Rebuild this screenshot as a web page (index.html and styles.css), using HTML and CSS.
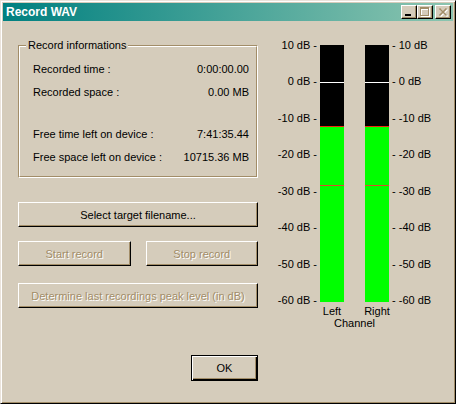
FILE: index.html
```html
<!DOCTYPE html>
<html>
<head>
<meta charset="utf-8">
<title>Record WAV</title>
<link rel="stylesheet" href="styles.css">
</head>
<body>
<div class="window">
  <div class="titlebar">
    <span class="title">Record WAV</span>
    <div class="caption-buttons">
      <span class="cbtn">
        <svg width="14" height="12" viewBox="0 0 14 12" shape-rendering="crispEdges"><rect x="3" y="8" width="6" height="2" fill="#000"/></svg>
      </span>
      <span class="cbtn">
        <svg width="14" height="12" viewBox="0 0 14 12" shape-rendering="crispEdges">
          <g fill="#fff" transform="translate(1,1)"><rect x="2" y="1" width="9" height="2"/><rect x="2" y="1" width="1" height="9"/><rect x="10" y="1" width="1" height="9"/><rect x="2" y="9" width="9" height="1"/></g>
          <g fill="#a28d68"><rect x="2" y="1" width="9" height="2"/><rect x="2" y="1" width="1" height="9"/><rect x="10" y="1" width="1" height="9"/><rect x="2" y="9" width="9" height="1"/></g>
        </svg>
      </span>
      <span class="cbtn close">
        <svg width="14" height="12" viewBox="0 0 14 12">
          <g stroke="#fff" stroke-width="1.6" transform="translate(1,1)"><path d="M3.5 2.5 L10.5 9.5 M10.5 2.5 L3.5 9.5"/></g>
          <g stroke="#a28d68" stroke-width="1.6"><path d="M3.5 2.5 L10.5 9.5 M10.5 2.5 L3.5 9.5"/></g>
        </svg>
      </span>
    </div>
  </div>
  <div class="content">
    <div class="main">
      <div class="left">
        <div class="group">
          <span class="group-label">Record informations</span>
          <div class="group-inner">
            <div class="row"><span>Recorded time :</span><span>0:00:00.00</span></div>
            <div class="row"><span>Recorded space :</span><span>0.00 MB</span></div>
            <div class="row spaced"><span>Free time left on device :</span><span>7:41:35.44</span></div>
            <div class="row"><span>Free space left on device :</span><span>10715.36 MB</span></div>
          </div>
        </div>
        <button class="btn select">Select target filename...</button>
        <div class="btn-row">
          <button class="btn" disabled>Start record</button>
          <button class="btn" disabled>Stop record</button>
        </div>
        <button class="btn determine" disabled>Determine last recordings peak level (in dB)</button>
      </div>
      <div class="meter">
        <div class="scale scale-l">
          <span>10 dB -</span><span>0 dB -</span><span>-10 dB -</span><span>-20 dB -</span>
          <span>-30 dB -</span><span>-40 dB -</span><span>-50 dB -</span><span>-60 dB -</span>
        </div>
        <div class="bars">
          <div class="bar-row">
            <div class="bar">
              <div class="seg-top"></div><div class="zero"></div><div class="seg-mid"></div><div class="peak"></div><div class="lvl-a"></div><div class="hold"></div><div class="lvl-b"></div>
            </div>
            <div class="bar">
              <div class="seg-top"></div><div class="zero"></div><div class="seg-mid"></div><div class="peak"></div><div class="lvl-a"></div><div class="hold"></div><div class="lvl-b"></div>
            </div>
          </div>
          <div class="chan-row"><span>Left</span><span>Right</span></div>
          <div class="chan">Channel</div>
        </div>
        <div class="scale scale-r">
          <span>- 10 dB</span><span>- 0 dB</span><span>- -10 dB</span><span>- -20 dB</span>
          <span>- -30 dB</span><span>- -40 dB</span><span>- -50 dB</span><span>- -60 dB</span>
        </div>
      </div>
    </div>
    <div class="footer">
      <button class="btn ok">OK</button>
    </div>
  </div>
</div>
</body>
</html>
```

FILE: styles.css
```css
* { box-sizing: border-box; }

html, body {
  margin: 0;
  padding: 0;
}

body {
  width: 456px;
  height: 404px;
  overflow: hidden;
  background: #d5ccbb;
  font-family: "Liberation Sans", Arial, sans-serif;
  font-size: 11px;
  color: #000;
}

.window {
  width: 456px;
  height: 404px;
  display: flex;
  flex-direction: column;
  background: #d5ccbb;
  border: 1px solid;
  border-color: #eae3db #000 #000 #eae3db;
  box-shadow: inset 1px 1px #fff, inset -1px -1px #a28d68;
  padding: 2px;
}

.titlebar {
  height: 18px;
  flex: none;
  display: flex;
  align-items: center;
  justify-content: space-between;
  padding: 0 2px 0 3px;
  background: linear-gradient(to right, #008080, #8cc5b0);
}

.title {
  color: #fff;
  font-weight: bold;
  font-size: 12px;
  line-height: 14px;
}

.caption-buttons {
  display: flex;
}

.cbtn {
  display: block;
  width: 16px;
  height: 14px;
  background: #d5ccbb;
  border: 1px solid;
  border-color: #fff #000 #000 #fff;
  box-shadow: inset -1px -1px #a28d68;
}

.cbtn svg {
  display: block;
}

.cbtn.close {
  margin-left: 2px;
}

.content {
  flex: 1;
  padding: 18px 0 0 15px;
}

.main {
  display: flex;
  align-items: flex-start;
}

.left {
  width: 240px;
  margin-top: 6px;
  display: flex;
  flex-direction: column;
}

.group {
  position: relative;
  border: 1px solid;
  border-color: #a28d68 #fff #fff #a28d68;
}

.group-inner {
  border: 1px solid;
  border-color: #fff #a28d68 #a28d68 #fff;
  padding: 16px 7px 12px 13px;
  display: flex;
  flex-direction: column;
  gap: 10px;
}

.group-label {
  position: absolute;
  top: -7px;
  left: 7px;
  padding: 0 2px;
  background: #d5ccbb;
  line-height: 13px;
}

.row {
  display: flex;
  justify-content: space-between;
  height: 13px;
  line-height: 13px;
}

.row.spaced {
  margin-top: 19px;
}

.btn {
  font: inherit;
  color: #000;
  height: 25px;
  padding: 0;
  background: #d5ccbb;
  border: 1px solid;
  border-color: #fff #000 #000 #fff;
  border-radius: 0;
  box-shadow: inset -1px -1px #a28d68;
}

.btn:disabled {
  color: #a28d68;
  text-shadow: 1px 1px #fff;
}

.select {
  margin-top: 24px;
}

.btn-row {
  display: flex;
  gap: 15px;
  margin-top: 14px;
}

.btn-row .btn {
  flex: 1;
}

.determine {
  margin-top: 17px;
}

.meter {
  display: flex;
  align-items: flex-start;
  margin-left: 9px;
}

.scale {
  height: 268px;
  display: flex;
  flex-direction: column;
  justify-content: space-between;
  line-height: 13px;
  white-space: nowrap;
}

.scale-l {
  width: 50px;
  text-align: right;
  margin-right: 3px;
}

.scale-r {
  margin-left: 3px;
}

.bars {
  margin-top: 6px;
  display: flex;
  flex-direction: column;
}

.bar-row {
  display: flex;
  gap: 21px;
}

.bar {
  width: 24px;
  height: 257px;
  display: flex;
  flex-direction: column;
  background: #000;
}

.seg-top { height: 37px; background: #000; }
.zero { height: 1px; background: #fff; }
.seg-mid { height: 43px; background: #000; }
.peak { height: 1px; background: #f02810; }
.lvl-a { height: 58px; background: #00ff00; }
.hold { height: 1px; background: #e0482c; }
.lvl-b { flex: 1; background: #00ff00; }

.chan-row {
  display: flex;
  gap: 21px;
  margin-top: 3px;
  line-height: 12px;
}

.chan-row span {
  width: 24px;
  display: flex;
  justify-content: center;
  white-space: nowrap;
}

.chan {
  text-align: center;
  line-height: 12px;
}

.footer {
  margin-top: 26px;
  padding-left: 173px;
}

.ok {
  width: 67px;
  height: 26px;
  border: 1px solid #000;
  box-shadow: inset 1px 1px #fff, inset -1px -1px #000, inset -2px -2px #a28d68;
}
```
